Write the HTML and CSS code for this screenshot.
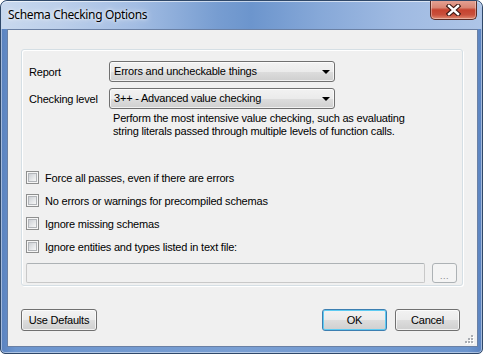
FILE: index.html
```
<!DOCTYPE html>
<html lang="en">
<head>
  <meta charset="UTF-8" />
  <title>Schema Checking Options</title>
  <link rel="stylesheet" href="styles.css">
</head>
<body>
  <div class="window">
    <div class="titlebar">
      <span class="title">Schema Checking Options</span>
      <div class="close">
        <svg width="15" height="12" viewBox="0 0 15 12">
          <path d="M3 2 L12 10 M12 2 L3 10" stroke="#3b1712" stroke-width="4.6" stroke-linecap="square" />
          <path d="M3 2 L12 10 M12 2 L3 10" stroke="#fff" stroke-width="2.4" stroke-linecap="square" />
        </svg>
      </div>
    </div>

    <div class="client">
      <div class="group">
        <div class="field-row">
          <span class="field-label">Report</span>
          <div class="combo">Errors and uncheckable things<span class="arrow"></span></div>
        </div>
        <div class="field-row second">
          <span class="field-label">Checking level</span>
          <div class="combo">3++ - Advanced value checking<span class="arrow"></span></div>
        </div>
        <div class="hint">
          Perform the most intensive value checking, such as evaluating<br>
          string literals passed through multiple levels of function calls.
        </div>

        <div class="checks">
          <label class="check-row"><span class="check"></span>Force all passes, even if there are errors</label>
          <label class="check-row"><span class="check"></span>No errors or warnings for precompiled schemas</label>
          <label class="check-row"><span class="check"></span>Ignore missing schemas</label>
          <label class="check-row"><span class="check"></span>Ignore entities and types listed in text file:</label>
        </div>

        <div class="file-row">
          <div class="file-input"></div>
          <div class="browse">...</div>
        </div>
      </div>

      <div class="buttons">
        <button type="button" class="btn defaults">Use Defaults</button>
        <div class="right-buttons">
          <button type="button" class="btn ok">OK</button>
          <button type="button" class="btn">Cancel</button>
        </div>
      </div>

      <svg class="grip" width="11" height="11" viewBox="0 0 11 11">
        <g fill="#fff">
          <rect x="9" y="3" width="2" height="2" /><rect x="6" y="6" width="2" height="2" /><rect x="9" y="6" width="2" height="2" />
          <rect x="3" y="9" width="2" height="2" /><rect x="6" y="9" width="2" height="2" /><rect x="9" y="9" width="2" height="2" />
        </g>
        <g fill="#a9adb3">
          <rect x="8" y="2" width="2" height="2" /><rect x="5" y="5" width="2" height="2" /><rect x="8" y="5" width="2" height="2" />
          <rect x="2" y="8" width="2" height="2" /><rect x="5" y="8" width="2" height="2" /><rect x="8" y="8" width="2" height="2" />
        </g>
      </svg>
    </div>
  </div>
</body>
</html>
```

FILE: styles.css
```
body {
  margin: 0;
  background: #fff;
  font-family: 'Liberation Sans', Arial, sans-serif;
  font-size: 11px;
  letter-spacing: -0.2px;
  color: #000;
}
.window {
  width: 483px;
  height: 354px;
  box-sizing: border-box;
  border: 1px solid #2f4869;
  border-radius: 7px 7px 5px 5px;
  background: linear-gradient(to right, #5a82bf 0, #6c95ce 3%, #7a9fd3 50%, #6c95ce 97%, #5a82bf 100%);
  box-shadow: inset 0 0 0 1px rgba(255, 255, 255, 0.45);
  display: flex;
  flex-direction: column;
  overflow: hidden;
}
.titlebar {
  height: 28px;
  display: flex;
  justify-content: space-between;
  align-items: flex-start;
  background: linear-gradient(to right, #c8d8ee 0, #bccfea 12%, #a3bde3 28%, #779dd1 45%, #6c95cd 52%, #86a8d8 66%, #9fbae2 82%, #aec5e7 100%);
  border-radius: 6px 6px 0 0;
  box-shadow: inset 0 1px 0 rgba(255, 255, 255, 0.6);
}
.title {
  padding: 6px 0 0 7px;
  font-family: 'Noto Sans', 'Open Sans', sans-serif;
  font-size: 12px;
  line-height: 16px;
  letter-spacing: -0.35px;
  text-shadow: 0 0 6px rgba(255, 255, 255, 0.9), 0 0 3px rgba(255, 255, 255, 0.8);
}
.close {
  width: 47px;
  height: 20px;
  margin: -1px 5px 0 0;
  box-sizing: border-box;
  border: 1px solid #5a2b24;
  border-top: none;
  border-radius: 0 0 5px 5px;
  background: linear-gradient(#e6a597 0, #d98573 40%, #c6432f 52%, #c9503c 78%, #e08b72 100%);
  box-shadow: inset 0 0 0 1px rgba(255, 255, 255, 0.35);
  display: flex;
  justify-content: center;
  align-items: center;
}
.client {
  position: relative;
  height: 318px;
  margin: 0 4px 0 6px;
  box-sizing: border-box;
  border: 1px solid #6a80a4;
  background: #f0f0f0;
}
.group {
  height: 237px;
  width: 442px;
  box-sizing: border-box;
  margin: 19px 0 0 13px;
  padding: 11px 0 0 4px;
  border: 1px solid #d5dfe5;
  border-radius: 3px;
  box-shadow: 1px 1px 0 #fff, inset 1px 1px 0 #fff;
}
.field-row {
  display: flex;
  align-items: center;
  height: 21px;
  margin-left: 3px;
}
.field-row.second {
  margin-top: 6px;
}
.field-label {
  width: 80px;
}
.combo {
  position: relative;
  width: 226px;
  height: 21px;
  box-sizing: border-box;
  padding: 0 0 0 4px;
  line-height: 19px;
  border: 1px solid #707070;
  border-radius: 3px;
  background: linear-gradient(#f2f2f2 0, #ebebeb 50%, #dddddd 51%, #cfcfcf 100%);
  box-shadow: inset 0 0 0 1px rgba(255, 255, 255, 0.7);
}
.arrow {
  position: absolute;
  right: 4px;
  top: 8px;
  width: 0;
  height: 0;
  border-left: 4px solid transparent;
  border-right: 4px solid transparent;
  border-top: 4px solid #000;
}
.hint {
  margin: 3px 0 0 87px;
  line-height: 13px;
}
.checks {
  margin-top: 28px;
}
.check-row {
  display: flex;
  align-items: center;
  gap: 6px;
  height: 23px;
}
.check {
  width: 13px;
  height: 13px;
  box-sizing: border-box;
  border: 1px solid #8e8f8f;
  background: #f6f6f6;
  display: flex;
  justify-content: center;
  align-items: center;
}
.check::after {
  content: "";
  width: 9px;
  height: 9px;
  box-sizing: border-box;
  border: 1px solid #b2b5b9;
  background: linear-gradient(135deg, #cdd0d5 0, #e4e6e8 55%, #f7f7f7 100%);
}
.file-row {
  display: flex;
  gap: 7px;
  margin-top: 5px;
}
.file-input {
  width: 399px;
  height: 20px;
  box-sizing: border-box;
  border: 1px solid #c8c8c8;
  border-top-color: #adb2b5;
  border-radius: 2px;
  background: #f0f0f0;
}
.browse {
  width: 25px;
  height: 20px;
  box-sizing: border-box;
  border: 1px solid #adb2b5;
  border-radius: 3px;
  background: #f4f4f4;
  color: #838383;
  text-align: center;
  line-height: 24px;
  font-size: 9px;
  letter-spacing: 0.5px;
}
.buttons {
  display: flex;
  justify-content: space-between;
  margin-top: 23px;
  padding: 0 17px 0 13px;
}
.right-buttons {
  display: flex;
  gap: 8px;
}
.btn {
  width: 65px;
  height: 22px;
  padding: 0;
  font-family: 'Liberation Sans', Arial, sans-serif;
  font-size: 11px;
  letter-spacing: -0.2px;
  color: #000;
  border: 1px solid #707070;
  border-radius: 3px;
  background: linear-gradient(#f2f2f2 0, #ebebeb 50%, #dddddd 51%, #cfcfcf 100%);
  box-shadow: inset 0 0 0 1px rgba(255, 255, 255, 0.7);
}
.btn.defaults {
  width: 76px;
}
.btn.ok {
  border-color: #3c7fb1;
  box-shadow: inset 0 0 0 1px #5ecbf2;
}
.grip {
  position: absolute;
  right: 3px;
  bottom: 2px;
}
```
